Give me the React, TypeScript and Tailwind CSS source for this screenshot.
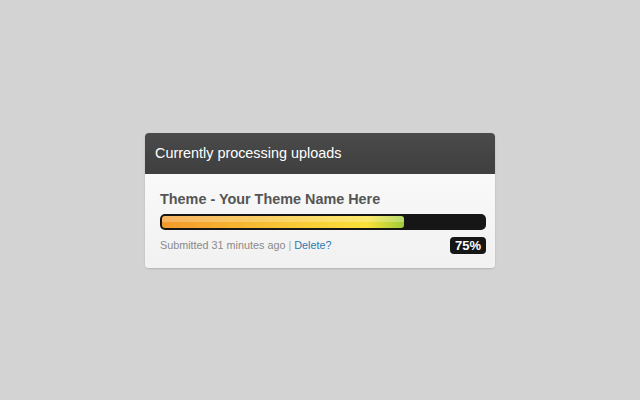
export default function App() {
  return (
    <div className="flex h-[400px] w-[640px] items-start justify-center bg-[#d3d3d3] pt-[133px] font-['Liberation_Sans',Arial,sans-serif]">
      <div className="w-[350px] overflow-hidden rounded-[4px] bg-[#f4f4f4] shadow-[0_1px_2px_rgba(0,0,0,0.15)]">
        <div className="flex h-[41px] items-center bg-gradient-to-b from-[#4a4a4a] to-[#3f3f3f] px-[10px] text-[14.4px] text-white">
          Currently processing uploads
        </div>
        <div className="bg-gradient-to-b from-[#f9f9f9] to-[#f1f1f1] pb-[14px] pl-[15px] pr-[9px] pt-[16px]">
          <div className="text-[14.4px] font-bold leading-[18px] text-[#555]">Theme - Your Theme Name Here</div>
          <div className="mt-[6px] h-[16px] rounded-[5px] bg-[#161616] p-[2px]">
            <div className="relative h-full w-[75%] overflow-hidden rounded-[3px] bg-gradient-to-r from-[#f39a2c] via-[#f9e23a] via-[85%] to-[#9ccc3a]">
              <div className="absolute inset-x-0 top-0 h-1/2 bg-white/25" />
            </div>
          </div>
          <div className="mt-[7px] flex items-center justify-between">
            <div className="text-[10.8px] text-[#8a8a8a]">
              Submitted 31 minutes ago <span className="text-[#aaa]">|</span>{' '}
              <span className="text-[#2b7bb0]">Delete?</span>
            </div>
            <div className="rounded-[4px] bg-[#161616] px-[5px] py-[1px] text-[13px] font-bold leading-[15px] text-white">75%</div>
          </div>
        </div>
      </div>
    </div>
  );
}
